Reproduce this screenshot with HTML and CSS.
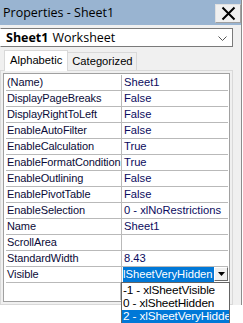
FILE: index.html
```html
<!DOCTYPE html>
<html>
<head>
<meta charset="utf-8">
<link rel="stylesheet" href="styles.css">
</head>
<body>
<div class="screen">
  <div class="window">
    <div class="titlebar">
      <span class="title">Properties - Sheet1</span>
      <div class="close">
        <svg width="15" height="15" viewBox="0 0 15 15"><path d="M1.5 1.5 L13.5 13.5 M13.5 1.5 L1.5 13.5" stroke="#000" stroke-width="2" fill="none"/></svg>
      </div>
    </div>
    <div class="objsel">
      <span class="objname">Sheet1</span><span class="objtype">Worksheet</span>
      <svg class="chev" width="9" height="6" viewBox="0 0 9 6"><path d="M0.5 0.5 L4.5 4.5 L8.5 0.5" stroke="#555" stroke-width="1" fill="none"/></svg>
    </div>
    <div class="tabs">
      <div class="tab active">Alphabetic</div>
      <div class="tab">Categorized</div>
    </div>
    <div class="panel">
      <div class="grid">
        <div class="row"><div class="k">(Name)</div><div class="v">Sheet1</div></div>
        <div class="row"><div class="k">DisplayPageBreaks</div><div class="v">False</div></div>
        <div class="row"><div class="k">DisplayRightToLeft</div><div class="v">False</div></div>
        <div class="row"><div class="k">EnableAutoFilter</div><div class="v">False</div></div>
        <div class="row"><div class="k">EnableCalculation</div><div class="v">True</div></div>
        <div class="row"><div class="k">EnableFormatCondition</div><div class="v">True</div></div>
        <div class="row"><div class="k">EnableOutlining</div><div class="v">False</div></div>
        <div class="row"><div class="k">EnablePivotTable</div><div class="v">False</div></div>
        <div class="row"><div class="k">EnableSelection</div><div class="v">0 - xlNoRestrictions</div></div>
        <div class="row"><div class="k">Name</div><div class="v">Sheet1</div></div>
        <div class="row"><div class="k">ScrollArea</div><div class="v"></div></div>
        <div class="row"><div class="k">StandardWidth</div><div class="v">8.43</div></div>
        <div class="row last"><div class="k">Visible</div><div class="v edit"><span class="sel">lSheetVeryHidden</span><div class="ddbtn"><svg width="7" height="4" viewBox="0 0 7 4"><path d="M0 0 H7 L3.5 4 Z" fill="#000"/></svg></div></div></div>
        <div class="blank"><div class="bk"></div><div class="bv"></div></div>
      </div>
    </div>
  </div>
  <div class="droplist">
    <div class="item">-1 - xlSheetVisible</div>
    <div class="item">0 - xlSheetHidden</div>
    <div class="item on">2 - xlSheetVeryHidden</div>
  </div>
</div>
</body>
</html>
```

FILE: styles.css
```css
html, body {
  margin: 0;
  padding: 0;
  background: #fff;
}
body {
  font-family: "Liberation Sans", Arial, sans-serif;
  font-size: 11px;
}
.screen {
  position: relative;
  width: 243px;
  height: 323px;
  overflow: hidden;
}
.window {
  width: 242px;
  height: 305px;
  background: #f0f0f0;
  border-right: 1px solid #8c8c8c;
  box-sizing: border-box;
  display: flex;
  flex-direction: column;
}
.titlebar {
  height: 25px;
  background: #99b4d1;
  display: flex;
  align-items: flex-start;
  justify-content: space-between;
  padding-left: 3px;
  flex-shrink: 0;
}
.title {
  font-family: "Open Sans", sans-serif;
  font-size: 12.5px;
  line-height: 25px;
  color: #000;
}
.close {
  margin-top: 4px;
  width: 26px;
  height: 19px;
  box-sizing: border-box;
  background: #f0f0f0;
  border: 1px solid #e0e0e0;
  border-right-color: #a0a0a0;
  border-bottom-color: #a0a0a0;
  display: flex;
  align-items: center;
  justify-content: center;
}
.objsel {
  margin-top: 3px;
  width: 233px;
  height: 19px;
  box-sizing: border-box;
  background: #fff;
  border: 1px solid #7a7a7a;
  border-left-color: #fff;
  display: flex;
  align-items: center;
  padding-left: 5px;
  position: relative;
  font-family: "Open Sans", sans-serif;
  font-size: 12.5px;
  color: #000;
  flex-shrink: 0;
}
.objname {
  font-weight: bold;
  margin-right: 4px;
}
.chev {
  position: absolute;
  right: 5px;
  top: 7px;
}
.tabs {
  display: flex;
  margin-top: 3px;
  padding-left: 4px;
  height: 20px;
  align-items: flex-end;
  flex-shrink: 0;
}
.tab {
  font-size: 11.2px;
  height: 18px;
  line-height: 17px;
  box-sizing: border-box;
  padding: 0 3px 0 4px;
  border: 1px solid #d9d9d9;
  border-left: none;
  border-bottom: none;
  background: #f0f0f0;
  color: #000;
}
.tab.active {
  height: 21px;
  line-height: 19px;
  background: #fff;
  border-left: 1px solid #d9d9d9;
  padding: 0 5px 0 5px;
  margin-bottom: -1px;
  position: relative;
  z-index: 1;
}
.panel {
  width: 233px;
  height: 235px;
  box-sizing: border-box;
  border: 1px solid #d9d9d9;
  padding: 2px;
  background: #f0f0f0;
  flex-shrink: 0;
}
.grid {
  height: 100%;
  box-sizing: border-box;
  border: 1px solid #a0a0a0;
  outline: 1px solid #fff;
  outline-offset: -2px;
  padding: 1px 1px 0 2px;
  background: #fff;
  display: flex;
  flex-direction: column;
}
.row {
  display: flex;
  height: 16px;
  border-bottom: 1px solid #b9b9b9;
  box-sizing: border-box;
  color: #0b0b38;
  flex-shrink: 0;
}
.k {
  width: 114px;
  padding-left: 1px;
  border-right: 1px solid #b9b9b9;
  line-height: 15px;
  white-space: nowrap;
  overflow: hidden;
  flex-shrink: 0;
  font-size: 11px;
  letter-spacing: -0.1px;
}
.v {
  flex: 1;
  padding-left: 2px;
  line-height: 15px;
  white-space: nowrap;
  overflow: hidden;
  color: #0b0b60;
  font-size: 11.2px;
}
.v.edit {
  display: flex;
  align-items: stretch;
  padding-left: 1px;
  overflow: visible;
}
.sel {
  background: #0078d7;
  color: #fff;
  width: 91px;
  overflow: hidden;
  margin-right: 0;
  font-size: 11.2px;
}
.ddbtn {
  width: 14px;
  height: 14px;
  box-sizing: border-box;
  background: #f0f0f0;
  border: 1px solid #fff;
  border-right-color: #696969;
  border-bottom-color: #696969;
  display: flex;
  align-items: center;
  justify-content: center;
}
.blank {
  flex: 1;
  display: flex;
}
.bk {
  width: 114px;
  border-right: 1px solid #b9b9b9;
}
.droplist {
  position: absolute;
  left: 121px;
  top: 282px;
  width: 109px;
  height: 42px;
  box-sizing: border-box;
  border: 1px solid #646464;
  background: #fff;
  padding-top: 1px;
  font-size: 11.8px;
  overflow: hidden;
}
.item {
  height: 13px;
  line-height: 13px;
  padding-left: 1px;
  white-space: nowrap;
  overflow: hidden;
  color: #000;
  letter-spacing: -0.15px;
}
.item.on {
  background: #0078d7;
  color: #fff;
}
```
